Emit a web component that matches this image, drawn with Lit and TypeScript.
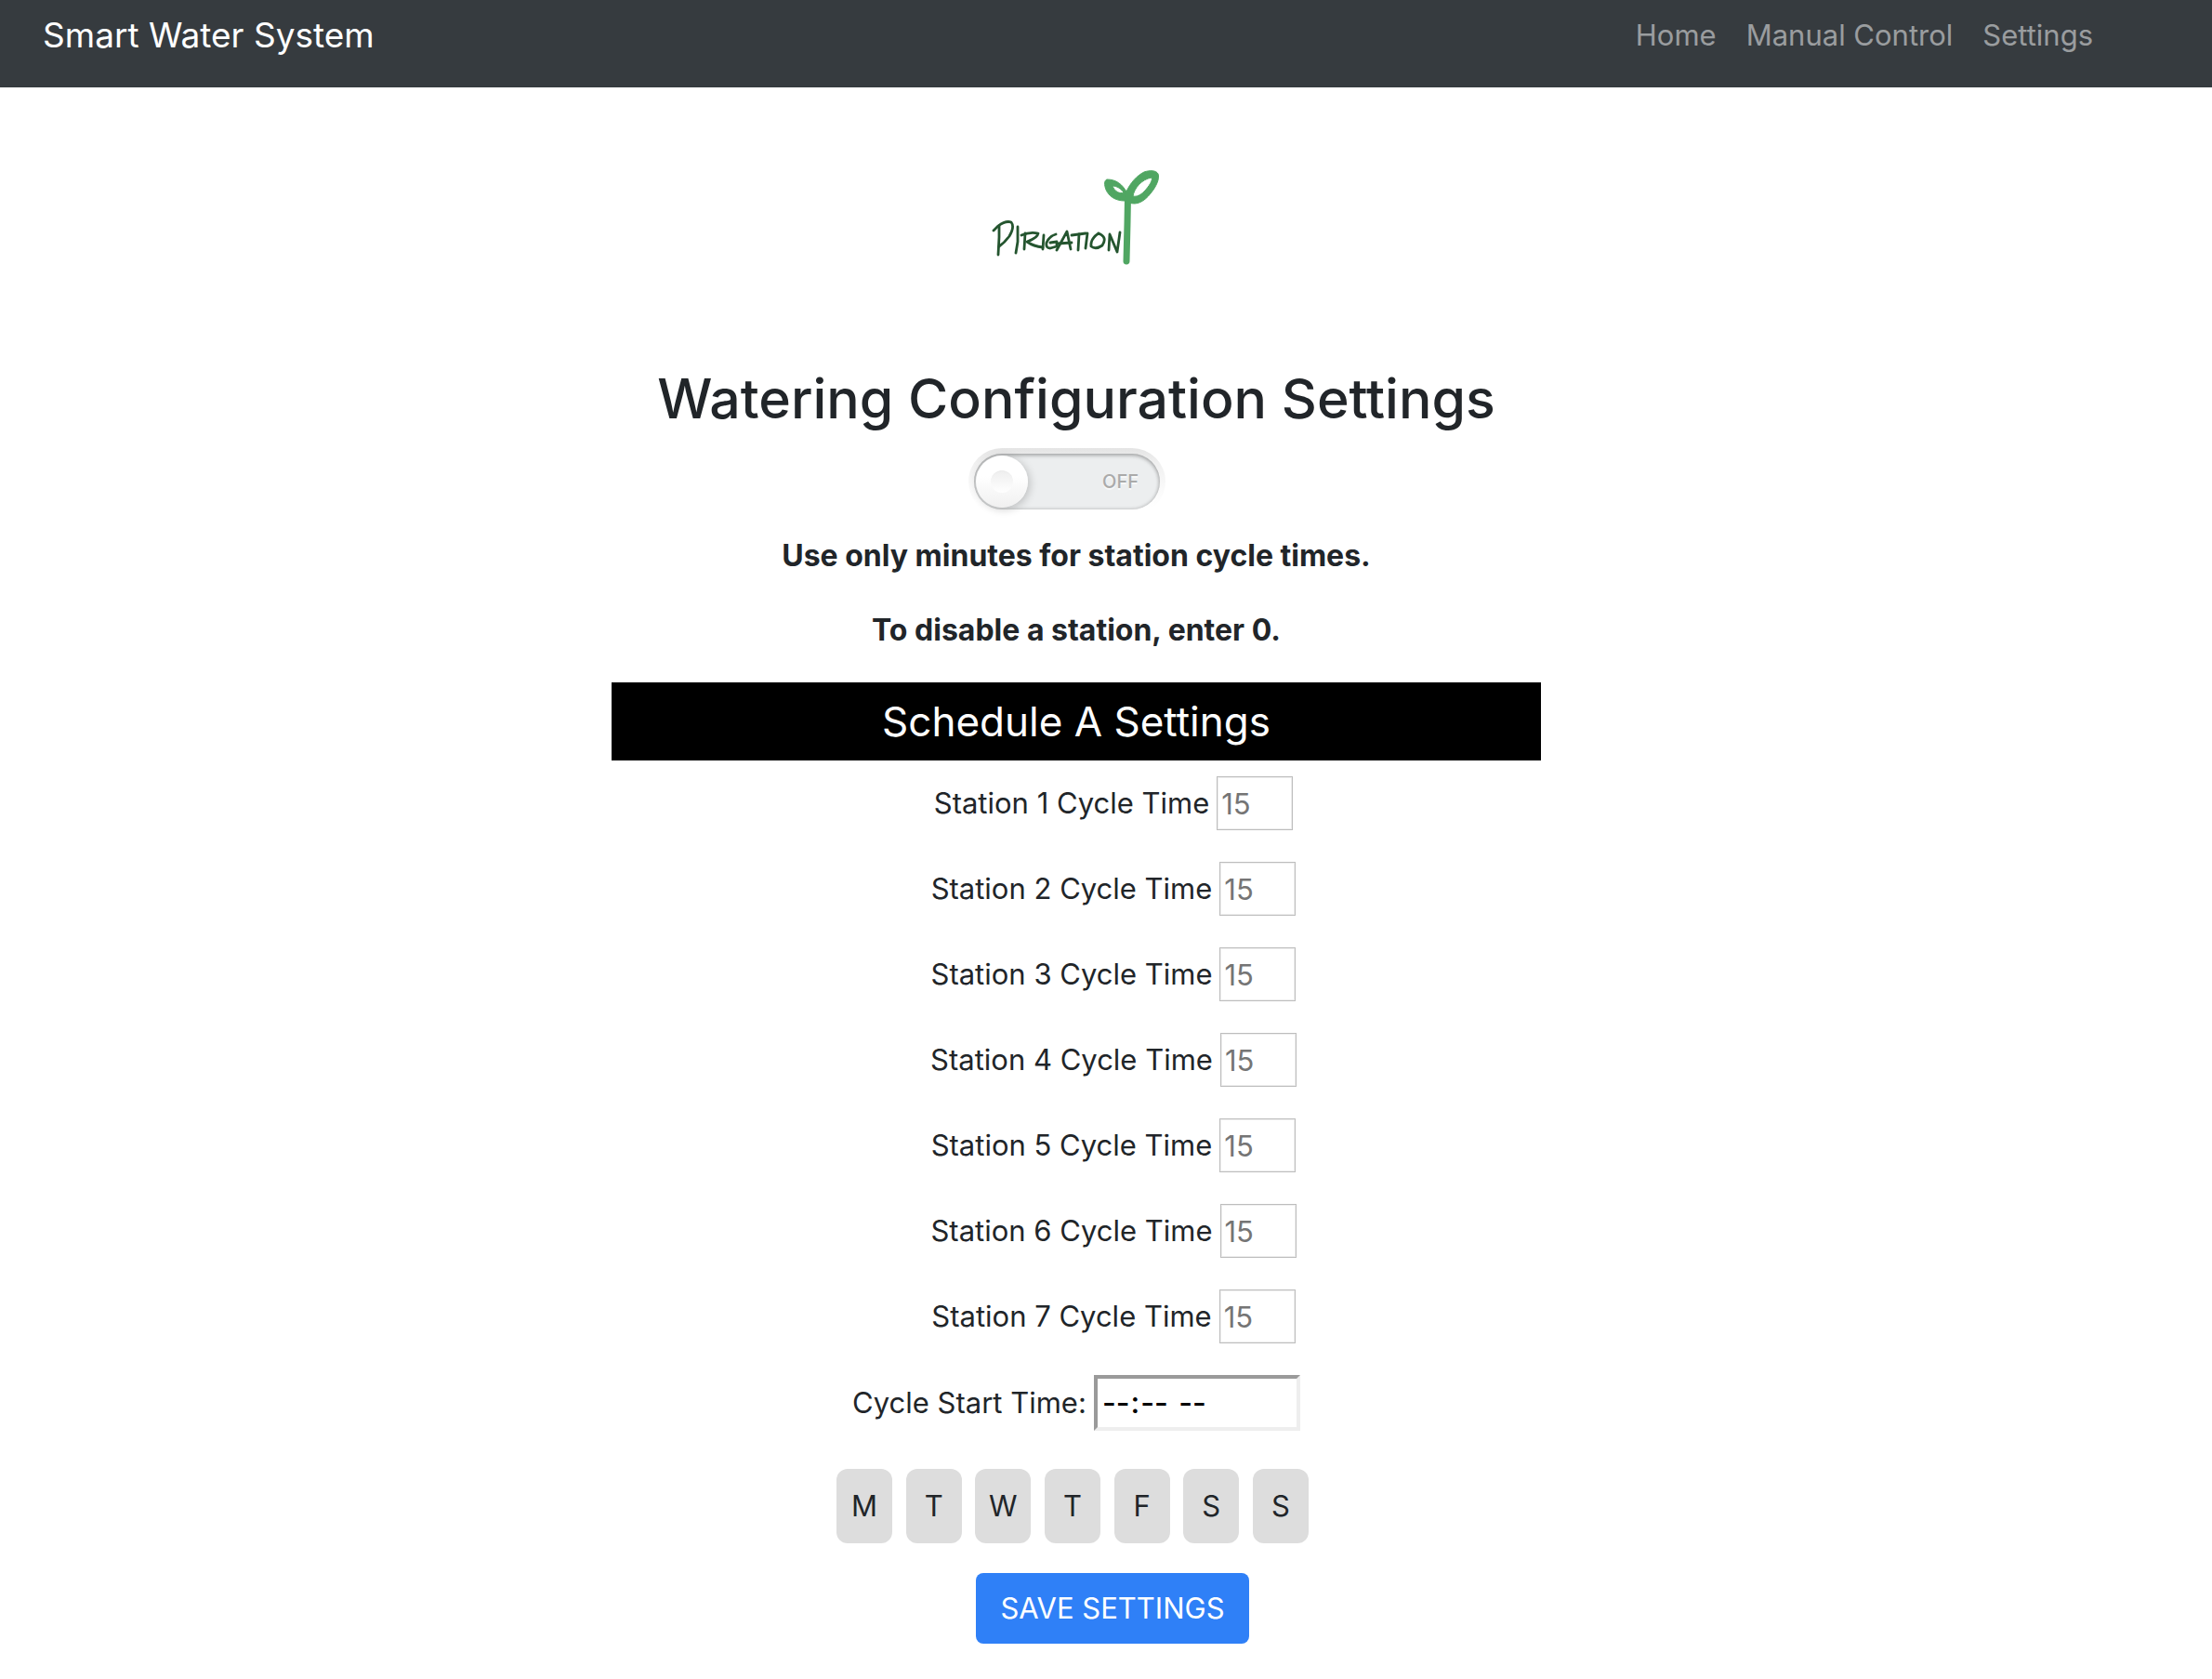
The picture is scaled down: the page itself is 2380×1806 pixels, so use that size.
import { LitElement, html, svg, css } from "lit";
import { customElement, state } from "lit/decorators.js";

const NAV_LINKS = ["Home", "Manual Control", "Settings"];
const STATIONS = [1, 2, 3, 4, 5, 6, 7];
const DAYS = [
  ["M", "Monday"],
  ["T", "Tuesday"],
  ["W", "Wednesday"],
  ["T", "Thursday"],
  ["F", "Friday"],
  ["S", "Saturday"],
  ["S", "Sunday"],
];

// Hand-drawn lettering strokes of the brand mark.
const LETTER_STROKES = [
  "M25 73 L25 85 L24 104",
  "M19 78 L24 73 Q32 67 38 69 Q42 74 36 84 Q31 91 25 95",
  "M45 74 L45 90 L43 102",
  "M53 81 L52 98",
  "M49 83 Q58 79 67 81 Q66 86 55 90 Q62 95 72 96",
  "M73 83 L72 98",
  "M86 82 Q79 84 76 91 Q75 97 80 97 L87 95 L87 90 L80 91",
  "M87 99 L98 79 L102 98",
  "M88 92 L103 91",
  "M103 83 L118 81",
  "M111 82 L110 99",
  "M120 81 L118 97",
  "M132 81 Q123 87 124 95 Q129 99 136 94 Q142 85 132 81",
  "M143 99 L144 82 L152 101 L155 80",
];

@customElement("brand-logo")
class BrandLogo extends LitElement {
  static styles = css`
    :host {
      display: block;
    }
    .mark {
      display: block;
      width: 220px;
      height: 130px;
    }
    .letters {
      fill: none;
      stroke: #24552f;
      stroke-width: 2.8;
      stroke-linecap: round;
      stroke-linejoin: round;
    }
    .stem,
    .leaf {
      fill: none;
      stroke: #50a662;
      stroke-width: 7;
      stroke-linecap: round;
      stroke-linejoin: round;
    }
    .leaf {
      fill: #50a662;
      fill-rule: evenodd;
      stroke-width: 1;
    }
  `;

  render() {
    return html`
      <svg class="mark" viewBox="-2 0 220 130" role="img" aria-label="Pirigation">
        <g class="letters">${LETTER_STROKES.map((d) => svg`<path d=${d} />`)}</g>
        <path class="stem" d="M163.500 42 L163 70 L162 111" />
        <path
          class="leaf"
          d="M162 36 C157 28 151 23 141 23 C138 24 138 29 140 34 C143 41 150 46 160 46 L164 42 Z
             M147 30 C152 30 156 33 159 37 C155 39 149 36 147 30 Z"
        />
        <path
          class="leaf"
          d="M162 36 C166 27 173 19 181 15 C187 13 194 13 196 17 C198 22 194 31 188 38
             C181 47 173 51 165 48 L160 43 Z
             M169 41 C170 33 178 23 189 21 C191 23 186 31 181 36 C177 40 173 42 169 41 Z"
        />
      </svg>
    `;
  }
}

@customElement("power-switch")
class PowerSwitch extends LitElement {
  @state() private on = false;

  static styles = css`
    :host {
      display: block;
    }
    .switch {
      display: block;
      position: relative;
      width: 200px;
      height: 60px;
      border-radius: 30px;
      cursor: pointer;
    }
    .switch::before {
      content: "";
      position: absolute;
      inset: -6px;
      border-radius: 36px;
      background: linear-gradient(#e4e4e4, #f0f0f0 16px, #fafafa 44px, #ffffff 64px);
    }
    .input {
      position: absolute;
      inset: 0;
      margin: 0;
      opacity: 0;
    }
    .track {
      position: absolute;
      inset: 0;
      display: flex;
      align-items: center;
      justify-content: flex-end;
      padding-right: 23px;
      border-radius: 30px;
      box-sizing: border-box;
      background: #eceeef;
      box-shadow: inset 0 2px 4px rgba(0, 0, 0, 0.24), inset 0 0 4px rgba(0, 0, 0, 0.2);
      color: #aaaaaa;
      font-size: 20px;
      font-weight: 500;
      line-height: 20px;
      text-shadow: 0 2px rgba(255, 255, 255, 0.6);
    }
    .handle {
      position: absolute;
      top: 2px;
      left: 2px;
      width: 56px;
      height: 56px;
      border-radius: 50%;
      background: linear-gradient(#ffffff 40%, #f0f0f0);
      box-shadow: 2px 2px 10px rgba(0, 0, 0, 0.2);
    }
    .handle::before {
      content: "";
      position: absolute;
      inset: 16px;
      border-radius: 50%;
      background: linear-gradient(#eeeeee, #ffffff);
      box-shadow: inset 0 1px rgba(0, 0, 0, 0.02);
    }
    .input:checked ~ .track {
      justify-content: flex-start;
      padding: 0 0 0 23px;
      background: #e1f5e5;
    }
    .input:checked ~ .handle {
      left: 142px;
    }
  `;

  render() {
    return html`
      <label class="switch">
        <input
          class="input"
          type="checkbox"
          aria-label="Watering system"
          .checked=${this.on}
          @change=${(e: Event) => (this.on = (e.target as HTMLInputElement).checked)}
        />
        <span class="track">${this.on ? "ON" : "OFF"}</span>
        <span class="handle"></span>
      </label>
    `;
  }
}

@customElement("app-root")
class AppRoot extends LitElement {
  static styles = css`
    :host {
      display: block;
      min-height: 100vh;
      background: #ffffff;
      color: #212529;
      font-family: Inter, "Liberation Sans", sans-serif;
      font-size: 31px;
      line-height: 48px;
    }
    .navbar {
      display: flex;
      align-items: flex-start;
      justify-content: space-between;
      padding: 8px 128px 26px 46px;
      background: #363b3f;
    }
    .brand {
      color: #ffffff;
      font-size: 37px;
      line-height: 60px;
      text-decoration: none;
    }
    .links {
      display: flex;
      gap: 32px;
      line-height: 60px;
    }
    .link {
      color: rgba(255, 255, 255, 0.5);
      text-decoration: none;
    }
    .page {
      display: flex;
      flex-direction: column;
      align-items: center;
      padding: 76px 64px 38px 0;
    }
    .title {
      margin: 90px 0 20px;
      font-size: 59px;
      font-weight: 500;
      line-height: 78px;
    }
    .switch {
      margin-right: 20px;
    }
    .hint {
      margin: 0 0 32px;
      font-size: 32px;
      font-weight: 700;
    }
    .hint-first {
      margin-top: 26px;
    }
    .form {
      display: flex;
      flex-direction: column;
      align-items: center;
      width: 100%;
      max-width: 1000px;
    }
    .schedule {
      align-self: stretch;
      margin: 0 0 17px;
      background: #000000;
      color: #ffffff;
      font-size: 44px;
      font-weight: 400;
      line-height: 84px;
      text-align: center;
    }
    .rows {
      display: flex;
      flex-direction: column;
      align-items: center;
      gap: 34px;
    }
    .row {
      display: flex;
      align-items: center;
      gap: 8px;
    }
    .station {
      padding-left: 80px;
    }
    .minutes {
      width: 82px;
      height: 58px;
      box-sizing: border-box;
      padding: 0 4px;
      border: 1px solid #bdbdbd;
      border-radius: 0;
      box-shadow: inset 0 0 0 1px #eeeeee;
      background: #ffffff;
      color: #212529;
      font: inherit;
    }
    .minutes::placeholder {
      color: #757575;
      opacity: 1;
    }
    .start {
      width: 222px;
      height: 60px;
      box-sizing: border-box;
      padding: 0 4px;
      border: 4px solid;
      border-color: #9a9a9a #eeeeee #eeeeee #9a9a9a;
      background: #ffffff;
      color: #000000;
      font: inherit;
      font-size: 32px;
      font-weight: 500;
    }
    .start::-webkit-datetime-edit-ampm-field {
      margin-left: 4px;
    }
    .start::-webkit-calendar-picker-indicator {
      display: none;
    }
    .days {
      display: flex;
      justify-content: space-between;
      width: 508px;
      margin: 41px 8px 32px 0;
      padding: 0;
      border: 0;
    }
    .day {
      display: grid;
      place-items: center;
      width: 60px;
      height: 80px;
      border-radius: 12px;
      background: #dddddd;
      cursor: pointer;
    }
    .day:has(.tick:checked) {
      background: #2ab1ce;
    }
    .tick,
    .letter {
      grid-area: 1 / 1;
    }
    .tick {
      margin: 0;
      opacity: 0;
    }
    .save {
      height: 76px;
      margin-left: 78px;
      padding: 0 26px;
      border: 0;
      border-radius: 8px;
      background: #2f80f7;
      color: #ffffff;
      font: inherit;
      cursor: pointer;
    }
  `;

  render() {
    return html`
      <nav class="navbar">
        <a class="brand" href="#">Smart Water System</a>
        <div class="links">
          ${NAV_LINKS.map((name) => html`<a class="link" href="#">${name}</a>`)}
        </div>
      </nav>
      <main class="page">
        <brand-logo></brand-logo>
        <h1 class="title">Watering Configuration Settings</h1>
        <power-switch class="switch"></power-switch>
        <p class="hint hint-first">Use only minutes for station cycle times.</p>
        <p class="hint">To disable a station, enter 0.</p>
        <form class="form" @submit=${(e: Event) => e.preventDefault()}>
          <h2 class="schedule">Schedule A Settings</h2>
          <div class="rows">
            ${STATIONS.map(
              (n) => html`
                <div class="row station">
                  <label for="station-${n}">Station ${n} Cycle Time</label>
                  <input class="minutes" id="station-${n}" inputmode="numeric" placeholder="15" />
                </div>
              `
            )}
            <div class="row">
              <label for="start-time">Cycle Start Time:</label>
              <input class="start" id="start-time" type="time" />
            </div>
          </div>
          <fieldset class="days" aria-label="Watering days">
            ${DAYS.map(
              ([letter, name]) => html`
                <label class="day">
                  <input class="tick" type="checkbox" aria-label=${name} />
                  <span class="letter">${letter}</span>
                </label>
              `
            )}
          </fieldset>
          <button class="save" type="submit">SAVE SETTINGS</button>
        </form>
      </main>
    `;
  }
}
